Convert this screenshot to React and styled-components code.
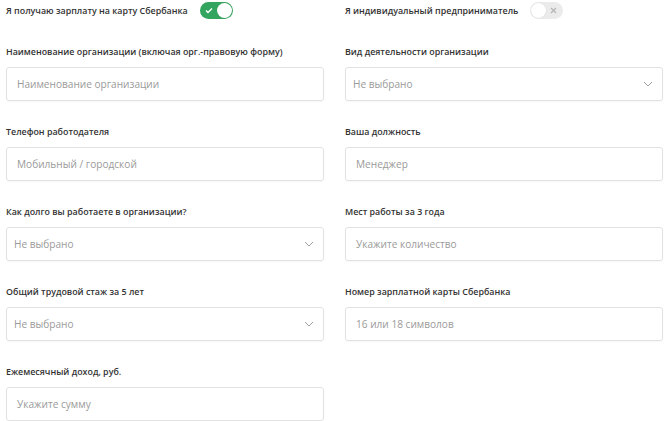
import React from "react"
import styled, { createGlobalStyle } from "styled-components"

const Global = createGlobalStyle`
body {
  margin: 0;
  background: #fff;
  font-family: "Open Sans", "Noto Sans", sans-serif;
}
`

const Page = styled.div`
padding: 0 7px 0 6px;
`

const Toggles = styled.div`
display: grid;
grid-template-columns: 318px 318px;
column-gap: 21px;
height: 20px;
align-items: center;
margin-bottom: 23px;
`

const ToggleRow = styled.div`
display: flex;
align-items: center;
gap: 12px;
`

const ToggleLabel = styled.span`
font-size: 8.9px;
font-weight: 600;
color: #333;
`

const Switch = styled.div`
position: relative;
width: 33px;
height: 17px;
border-radius: 9px;
background: ${p => (p.on ? "#34a55f" : "#ebebeb")};
display: flex;
align-items: center;
`

const Knob = styled.div`
position: absolute;
top: 1px;
${p => (p.on ? "right: 1px;" : "left: 1px;")}
width: 15px;
height: 15px;
border-radius: 50%;
background: #fff;
box-shadow: 0 0 1px rgba(0,0,0,0.15);
`

const Mark = styled.svg`
position: absolute;
top: 5px;
${p => (p.on ? "left: 5px;" : "right: 6px;")}
`

const Grid = styled.div`
display: grid;
grid-template-columns: 318px 318px;
column-gap: 21px;
row-gap: 22px;
`

const Field = styled.div`
display: flex;
flex-direction: column;
gap: 8px;
`

const Label = styled.div`
font-size: 8.9px;
font-weight: 600;
color: #333;
line-height: 16px;
height: 16px;
padding-top: 1px;
margin-bottom: -1px;
`

const Box = styled.div`
box-sizing: border-box;
height: 34px;
border: 1px solid #e2e2e2;
border-radius: 3px;
box-shadow: 0 1px 2px rgba(0,0,0,0.04);
display: flex;
align-items: center;
justify-content: space-between;
padding: 0 ${p => (p.select ? "9px 0 7px" : "0 0 10px")};
font-size: 10.1px;
color: #9a9a9a;
`

const Chevron = () => (
  <svg width="10" height="6" viewBox="0 0 10 6">
    <path d="M1 1 L5 5 L9 1" fill="none" stroke="#a0a0a0" strokeWidth="1" />
  </svg>
)

const Toggle = ({ on }) => (
  <Switch on={on}>
    {on ? (
      <Mark on={on} width="8" height="7" viewBox="0 0 8 7">
        <path d="M1 3.5 L3 5.5 L7 1.5" fill="none" stroke="#fff" strokeWidth="1.4" />
      </Mark>
    ) : (
      <Mark width="7" height="7" viewBox="0 0 7 7">
        <path d="M1 1 L6 6 M6 1 L1 6" fill="none" stroke="#b5b5b5" strokeWidth="1.3" />
      </Mark>
    )}
    <Knob on={on} />
  </Switch>
)

const fields = [
  { label: "Наименование организации (включая орг.-правовую форму)", text: "Наименование организации" },
  { label: "Вид деятельности организации", text: "Не выбрано", select: true },
  { label: "Телефон работодателя", text: "Мобильный / городской" },
  { label: "Ваша должность", text: "Менеджер" },
  { label: "Как долго вы работаете в организации?", text: "Не выбрано", select: true },
  { label: "Мест работы за 3 года", text: "Укажите количество" },
  { label: "Общий трудовой стаж за 5 лет", text: "Не выбрано", select: true },
  { label: "Номер зарплатной карты Сбербанка", text: "16 или 18 символов" },
  { label: "Ежемесячный доход, руб.", text: "Укажите сумму" },
]

export default function App() {
  return (
    <Page>
      <Global />
      <Toggles>
        <ToggleRow>
          <ToggleLabel>Я получаю зарплату на карту Сбербанка</ToggleLabel>
          <Toggle on />
        </ToggleRow>
        <ToggleRow>
          <ToggleLabel>Я индивидуальный предприниматель</ToggleLabel>
          <Toggle />
        </ToggleRow>
      </Toggles>
      <Grid>
        {fields.map(f => (
          <Field key={f.label}>
            <Label>{f.label}</Label>
            <Box select={f.select}>
              <span>{f.text}</span>
              {f.select && <Chevron />}
            </Box>
          </Field>
        ))}
      </Grid>
    </Page>
  )
}
